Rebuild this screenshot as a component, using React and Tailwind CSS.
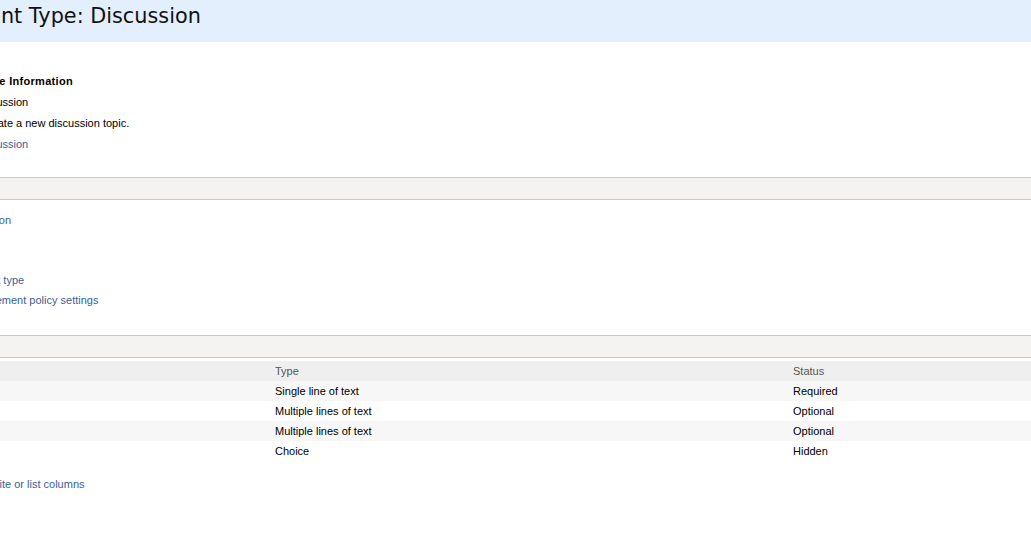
const infoRows = [
  { label: "Name:", value: "Discussion", shift: true },
  { label: "Description:", value: "Create a new discussion topic." },
  { label: "Parent:", value: "Discussion", link: true, shift: true },
];

const settingsLinks = [
  { text: "Name and description" },
  { text: "Advanced settings" },
  { text: "Workflow settings" },
  { text: "Delete this site content type", shift: true },
  { text: "Information management policy settings" },
];

const columns = [
  { name: "Title", type: "Single line of text", status: "Required" },
  { name: "Body", type: "Multiple lines of text", status: "Optional" },
  { name: "Thread Topic", type: "Multiple lines of text", status: "Optional" },
  { name: "Content Type", type: "Choice", status: "Hidden" },
];

const SectionBar = ({ title, className = "" }) => (
  <div
    className={`h-[23px] border-y border-[#c9c9c9] bg-[#f4f3f1] pl-[8px] text-[11px] font-bold leading-[21px] text-[#4c4c4c] ${className}`}
  >
    {title}
  </div>
);

export default function App() {
  return (
    <div className="h-screen w-full overflow-hidden bg-white font-['Liberation_Sans',Arial,sans-serif] text-[11px] text-black">
      {/* page title band */}
      <div className="h-[42px] overflow-hidden bg-[#e4effd]">
        <h1 className="-ml-[107px] whitespace-nowrap pt-[6px] font-['DejaVu_Sans',Verdana,sans-serif] text-[20.8px] font-normal leading-none text-[#111]">
          Site Content Type: Discussion
        </h1>
      </div>

      <div className="-ml-[95px] whitespace-nowrap">
        {/* information */}
        <div className="mt-[29px] pl-[3px] font-bold leading-[20px] tracking-[0.3px]">
          Site Content Type Information
        </div>
        <div className="mt-[1px]">
          {infoRows.map((row) => (
            <div key={row.label} className="flex h-[21px] items-center">
              <div className="w-[75px] text-[#4c4c4c]">{row.label}</div>
              <div
                className={`${row.link ? "text-[#3a6194]" : ""} ${
                  row.shift ? "-ml-[5px]" : ""
                }`}
              >
                {row.value}
              </div>
            </div>
          ))}
        </div>

        {/* settings */}
        <SectionBar title="Settings" className="mt-[22px]" />
        <div className="pt-[10px]">
          {settingsLinks.map((l) => (
            <div
              key={l.text}
              className={`h-[20px] leading-[20px] text-[#3a6194] ${
                l.shift ? "-ml-[16px]" : "-ml-[1px]"
              }`}
            >
              {l.text}
            </div>
          ))}
        </div>

        {/* columns */}
        <SectionBar title="Columns" className="mt-[25px]" />
        <div className="mt-[3px]">
          <div className="grid h-[20px] grid-cols-[370px_518px_1fr] items-center bg-[#efefef] text-[#555]">
            <div className="pl-[8px]">Name</div>
            <div>Type</div>
            <div>Status</div>
          </div>
          {columns.map((c, i) => (
            <div
              key={c.name}
              className={`grid h-[20px] grid-cols-[370px_518px_1fr] items-center ${
                i % 2 === 0 ? "bg-[#f7f7f7]" : "bg-white"
              }`}
            >
              <div className="pl-[8px] text-[#3a6194]">{c.name}</div>
              <div>{c.type}</div>
              <div>{c.status}</div>
            </div>
          ))}
        </div>
        <div className="mt-[13px] h-[20px] pl-[1px] leading-[20px] text-[#3a6194]">
          Add from existing site or list columns
        </div>
        <div className="h-[20px] pl-[1px] leading-[20px] text-[#3a6194]">
          Column order
        </div>
      </div>
    </div>
  );
}
